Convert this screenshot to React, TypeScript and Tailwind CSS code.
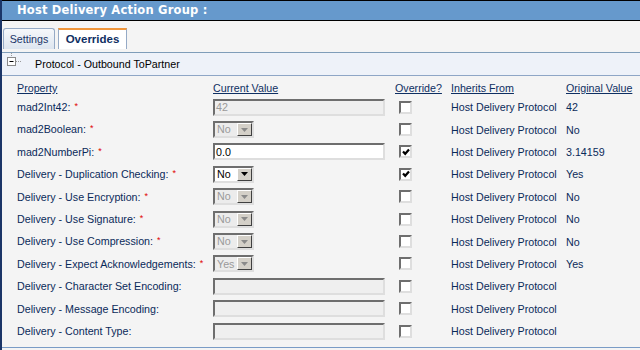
import React from "react";

type Row = {
  label: string;
  required: boolean;
  kind: "text" | "select";
  value: string;
  disabled: boolean;
  checked: boolean;
  original: string;
};

const ROWS: Row[] = [
  { label: "mad2Int42:", required: true, kind: "text", value: "42", disabled: true, checked: false, original: "42" },
  { label: "mad2Boolean:", required: true, kind: "select", value: "No", disabled: true, checked: false, original: "No" },
  { label: "mad2NumberPi:", required: true, kind: "text", value: "0.0", disabled: false, checked: true, original: "3.14159" },
  { label: "Delivery - Duplication Checking:", required: true, kind: "select", value: "No", disabled: false, checked: true, original: "Yes" },
  { label: "Delivery - Use Encryption:", required: true, kind: "select", value: "No", disabled: true, checked: false, original: "No" },
  { label: "Delivery - Use Signature:", required: true, kind: "select", value: "No", disabled: true, checked: false, original: "No" },
  { label: "Delivery - Use Compression:", required: true, kind: "select", value: "No", disabled: true, checked: false, original: "No" },
  { label: "Delivery - Expect Acknowledgements:", required: true, kind: "select", value: "Yes", disabled: true, checked: false, original: "Yes" },
  { label: "Delivery - Character Set Encoding:", required: false, kind: "text", value: "", disabled: true, checked: false, original: "" },
  { label: "Delivery - Message Encoding:", required: false, kind: "text", value: "", disabled: true, checked: false, original: "" },
  { label: "Delivery - Content Type:", required: false, kind: "text", value: "", disabled: true, checked: false, original: "" },
];

const INHERITS = "Host Delivery Protocol";

function TextBox({ value, disabled }: { value: string; disabled: boolean }) {
  return (
    <div
      className={`flex h-[17px] w-[172px] items-center border-2 border-t-[#6e6e6e] border-l-[#6e6e6e] border-b-[#dedede] border-r-[#dedede] pl-[1px] leading-none ${
        disabled ? "bg-[#efefef] text-[#9a9a9a]" : "bg-white text-black"
      }`}
    >
      {value}
    </div>
  );
}

function SelectBox({ value, disabled }: { value: string; disabled: boolean }) {
  return (
    <div
      className={`flex h-[17px] w-[41px] border-2 border-t-[#6e6e6e] border-l-[#6e6e6e] border-b-[#dedede] border-r-[#dedede] leading-none ${
        disabled ? "bg-[#ececec] text-[#9a9a9a]" : "bg-white text-black"
      }`}
    >
      <span className="flex flex-1 items-center pl-[2px]">{value}</span>
      <span className="flex w-[15px] items-center justify-center border border-t-white border-l-white border-b-[#404040] border-r-[#404040] bg-[#d4d0c8]">
        <svg width="7" height="4" viewBox="0 0 7 4">
          <path d="M0 0h7L3.5 4z" fill={disabled ? "#8a8a8a" : "#000"} />
        </svg>
      </span>
    </div>
  );
}

function CheckBox({ checked }: { checked: boolean }) {
  return (
    <div className="ml-[4px] flex h-[13px] w-[13px] items-center justify-center border-2 border-t-[#6e6e6e] border-l-[#6e6e6e] border-b-[#dedede] border-r-[#dedede] bg-white">
      {checked && (
        <svg width="8" height="8" viewBox="0 0 8 8">
          <path d="M1 3.5l2.2 2.3L7 1.5" fill="none" stroke="#000" strokeWidth="2.2" />
        </svg>
      )}
    </div>
  );
}

function ExpandIcon() {
  return (
    <svg width="22" height="22" viewBox="0 0 22 22" className="shrink-0">
      <path d="M8.5 0v4" stroke="#9a9a9a" strokeDasharray="1 1" />
      <rect x="4.5" y="4.5" width="8" height="8" fill="#fff" stroke="#8a8a8a" />
      <path d="M6.5 8.5h4" stroke="#000" />
      <path d="M13 8.5h6" stroke="#9a9a9a" strokeDasharray="1 1" />
    </svg>
  );
}

export default function App() {
  return (
    <div className="h-[350px] w-[640px] overflow-hidden border-l-2 border-[#1b3567] bg-[#f4f4f4] font-['Liberation_Sans',Arial,sans-serif] text-[10.7px]">
      {/* Title bar */}
      <div className="flex h-[21px] items-center border-y border-black bg-[#6699cc] pl-[15px] font-['DejaVu_Sans',Verdana,sans-serif] text-[11.5px] font-bold tracking-[0.2px] text-white">
        Host Delivery Action Group :
      </div>

      {/* Tabs */}
      <div className="flex h-[32px] items-end gap-[3px] border-b border-[#7f9db9] pb-[3px] pl-[1px]">
        <div className="flex h-[21px] w-[52px] items-center justify-center rounded-t-[3px] border border-b-0 border-[#95aac6] bg-gradient-to-b from-[#f6f8fb] to-[#dde5ef] text-[#1b3567]">
          Settings
        </div>
        <div className="flex h-[21px] w-[69px] items-center justify-center border-x border-t-2 border-x-[#95aac6] border-t-[#f0953a] bg-white text-[11.5px] font-bold text-[#0f2f63]">
          Overrides
        </div>
      </div>

      {/* Group header */}
      <div className="flex h-[23px] items-center border-b border-[#8ea6c6] bg-[#eef2f9] pl-[1px] text-black">
        <ExpandIcon />
        <span className="ml-[10px]">Protocol - Outbound ToPartner</span>
      </div>

      {/* Column headers */}
      <div className="grid h-[20px] grid-cols-[196px_182px_56px_115px_1fr] items-end pl-[15px] text-[#0e2f62] underline">
        <span>Property</span>
        <span>Current Value</span>
        <span>Override?</span>
        <span>Inherits From</span>
        <span>Original Value</span>
      </div>

      {/* Rows */}
      {ROWS.map((row) => (
        <div
          key={row.label}
          className="grid h-[22.4px] grid-cols-[196px_182px_56px_115px_1fr] items-center pl-[15px] text-[#0a2a5a]"
        >
          <span className="whitespace-nowrap">
            {row.label}
            {row.required && (
              <span className="relative -top-[2px] ml-[4px] text-[9px] text-[#e00000]">*</span>
            )}
          </span>
          <span>
            {row.kind === "text" ? (
              <TextBox value={row.value} disabled={row.disabled} />
            ) : (
              <SelectBox value={row.value} disabled={row.disabled} />
            )}
          </span>
          <span>
            <CheckBox checked={row.checked} />
          </span>
          <span className="whitespace-nowrap">{INHERITS}</span>
          <span>{row.original}</span>
        </div>
      ))}

      <div className="mt-[4.6px] border-t border-[#7a9cc6]" />
    </div>
  );
}
